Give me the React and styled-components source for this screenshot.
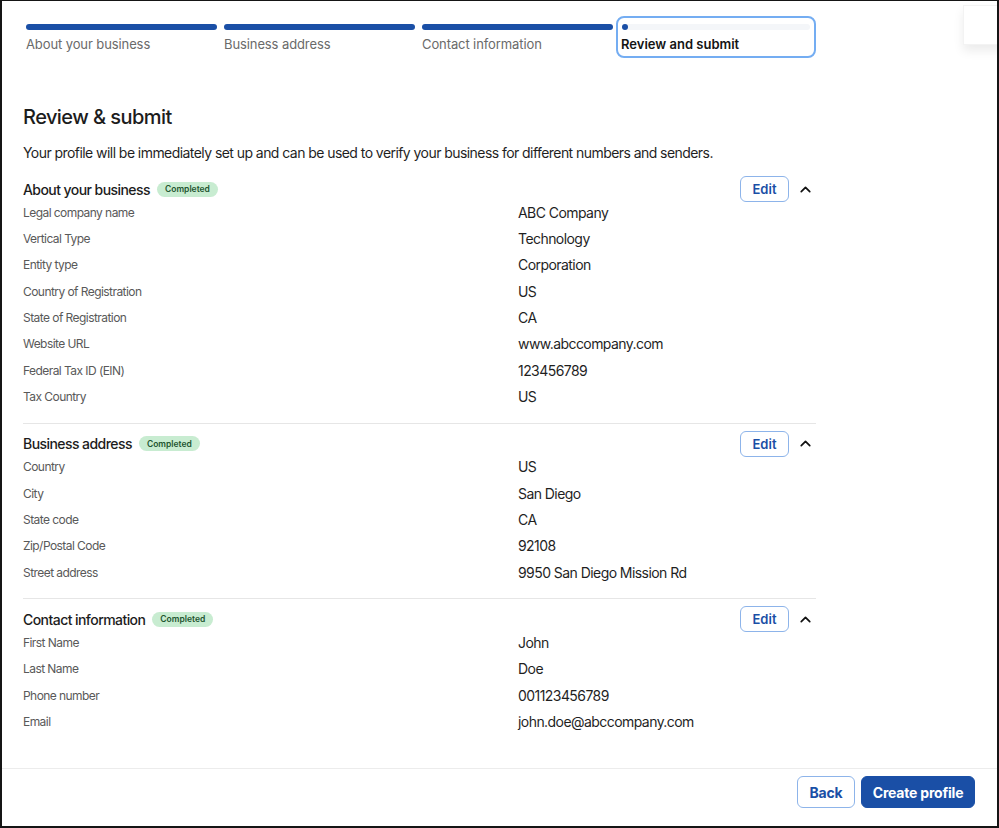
import styled, { createGlobalStyle } from "styled-components";
import { ChevronUp } from "lucide-react";

const GlobalStyle = createGlobalStyle`
  * { box-sizing: border-box; }
  body {
    margin: 0;
    font-family: Inter, "Noto Sans", sans-serif;
    letter-spacing: -0.035em;
    color: #1f1f1f;
    background: #fff;
  }
`;

const Frame = styled.div`
  position: relative;
  width: 999px;
  height: 828px;
  border: 2px solid #151515;
  border-top-width: 1px;
  display: flex;
  flex-direction: column;
  overflow: hidden;
`;

const Corner = styled.div`
  position: absolute;
  top: 4px;
  right: -8px;
  width: 42px;
  height: 40px;
  background: #fff;
  border: 1px solid #f3f3f3;
  box-shadow: 0 6px 10px rgba(0, 0, 0, 0.08);
`;

const Main = styled.main`
  flex: 1;
  padding: 15px 0 0 21px;
  width: 814px;
`;

const Steps = styled.div`
  display: flex;
`;

const Step = styled.div`
  width: ${(p) => (p.$active ? "200px" : "198px")};
  height: 42px;
  margin-left: ${(p) => (p.$active ? "-1px" : "0")};
  border: ${(p) => (p.$active ? "2px solid #74adf2" : "none")};
  border-radius: 8px;
  padding: ${(p) => (p.$active ? "6px 4px 0 3px" : "8px 0 0 3px")};
`;

const Bar = styled.div`
  position: relative;
  width: ${(p) => (p.$active ? "auto" : "191px")};
  height: 6px;
  border-radius: 3px;
  background: ${(p) => (p.$active ? "#f4f6f9" : "#1a4fa6")};
  margin-left: ${(p) => (p.$active ? "1px" : "0")};
`;

const Dot = styled.span`
  position: absolute;
  left: 0;
  top: 0;
  width: 6px;
  height: 6px;
  border-radius: 50%;
  background: #1a4fa6;
`;

const StepLabel = styled.div`
  margin-top: 6px;
  font-size: 13px;
  line-height: 16px;
  letter-spacing: ${(p) => (p.$active ? "0" : "-0.1px")};
  font-weight: ${(p) => (p.$active ? 600 : 400)};
  color: ${(p) => (p.$active ? "#141414" : "#6a6a6a")};
`;

const Title = styled.h1`
  margin: 46px 0 0;
  font-size: 20px;
  line-height: 26px;
  font-weight: 500;
  color: #1c1c1c;
`;

const Intro = styled.p`
  margin: 14px 0 0;
  font-size: 14px;
  line-height: 18px;
  color: #1f1f1f;
`;

const Section = styled.section`
  padding: ${(p) => (p.$first ? "17px" : "10px")} 0 13px;
  border-bottom: ${(p) => (p.$last ? "none" : "1px solid #e6e6e6")};
`;

const SectionHead = styled.div`
  height: 20px;
  display: flex;
  align-items: center;
`;

const SectionTitle = styled.h2`
  margin: 0;
  font-size: 14px;
  font-weight: 500;
  color: #1c1c1c;
`;

const Badge = styled.span`
  margin-left: 7px;
  height: 15px;
  padding: 0 8px;
  border-radius: 8px;
  background: #c8ecd1;
  color: #1e5530;
  font-size: 8.5px;
  letter-spacing: 0;
  font-weight: 600;
  display: inline-flex;
  align-items: center;
`;

const Actions = styled.div`
  margin-left: auto;
  margin-right: 2px;
  display: flex;
  align-items: center;
  gap: 8px;
`;

const EditButton = styled.button`
  width: 49px;
  height: 26px;
  border: 1px solid #8db4ea;
  border-radius: 6px;
  background: #fff;
  color: #1a4fa6;
  font-family: inherit;
  font-size: 13px;
  letter-spacing: 0;
  font-weight: 600;
`;

const Toggle = styled.span`
  width: 17px;
  display: inline-flex;
  color: #111;
`;

const Row = styled.div`
  height: 26.35px;
  display: grid;
  grid-template-columns: 495px 1fr;
  align-items: center;
`;

const Label = styled.span`
  font-size: 12px;
  color: #595959;
`;

const Value = styled.span`
  font-size: 14px;
  color: #1f1f1f;
`;

const Footer = styled.footer`
  height: 58px;
  border-top: 1px solid #ececec;
  display: flex;
  justify-content: flex-end;
  align-items: flex-start;
  gap: 6px;
  padding: 7px 22px 0 0;
`;

const Button = styled.button`
  width: ${(p) => (p.$primary ? "114px" : "58px")};
  height: 32px;
  padding: 0;
  border-radius: 6px;
  border: 1px solid ${(p) => (p.$primary ? "#1a4fa6" : "#8db4ea")};
  background: ${(p) => (p.$primary ? "#1a4fa6" : "#fff")};
  color: ${(p) => (p.$primary ? "#fff" : "#1a4fa6")};
  font-family: inherit;
  font-size: 14px;
  letter-spacing: -0.2px;
  font-weight: 700;
`;

const steps = [
  "About your business",
  "Business address",
  "Contact information",
  "Review and submit",
];

const sections = [
  {
    title: "About your business",
    rows: [
      ["Legal company name", "ABC Company"],
      ["Vertical Type", "Technology"],
      ["Entity type", "Corporation"],
      ["Country of Registration", "US"],
      ["State of Registration", "CA"],
      ["Website URL", "www.abccompany.com"],
      ["Federal Tax ID (EIN)", "123456789"],
      ["Tax Country", "US"],
    ],
  },
  {
    title: "Business address",
    rows: [
      ["Country", "US"],
      ["City", "San Diego"],
      ["State code", "CA"],
      ["Zip/Postal Code", "92108"],
      ["Street address", "9950 San Diego Mission Rd"],
    ],
  },
  {
    title: "Contact information",
    rows: [
      ["First Name", "John"],
      ["Last Name", "Doe"],
      ["Phone number", "001123456789"],
      ["Email", "john.doe@abccompany.com"],
    ],
  },
];

export default function App() {
  return (
    <Frame>
      <GlobalStyle />
      <Corner />
      <Main>
        <Steps>
          {steps.map((s, i) => {
            const active = i === steps.length - 1;
            return (
              <Step key={s} $active={active}>
                <Bar $active={active}>{active && <Dot />}</Bar>
                <StepLabel $active={active}>{s}</StepLabel>
              </Step>
            );
          })}
        </Steps>

        <Title>Review &amp; submit</Title>
        <Intro>
          Your profile will be immediately set up and can be used to verify
          your business for different numbers and senders.
        </Intro>

        {sections.map((sec, i) => (
          <Section key={sec.title} $first={i === 0} $last={i === sections.length - 1}>
            <SectionHead>
              <SectionTitle>{sec.title}</SectionTitle>
              <Badge>Completed</Badge>
              <Actions>
                <EditButton>Edit</EditButton>
                <Toggle>
                  <ChevronUp size={17} strokeWidth={2.4} />
                </Toggle>
              </Actions>
            </SectionHead>
            {sec.rows.map(([label, value]) => (
              <Row key={label}>
                <Label>{label}</Label>
                <Value>{value}</Value>
              </Row>
            ))}
          </Section>
        ))}
      </Main>
      <Footer>
        <Button>Back</Button>
        <Button $primary>Create profile</Button>
      </Footer>
    </Frame>
  );
}
